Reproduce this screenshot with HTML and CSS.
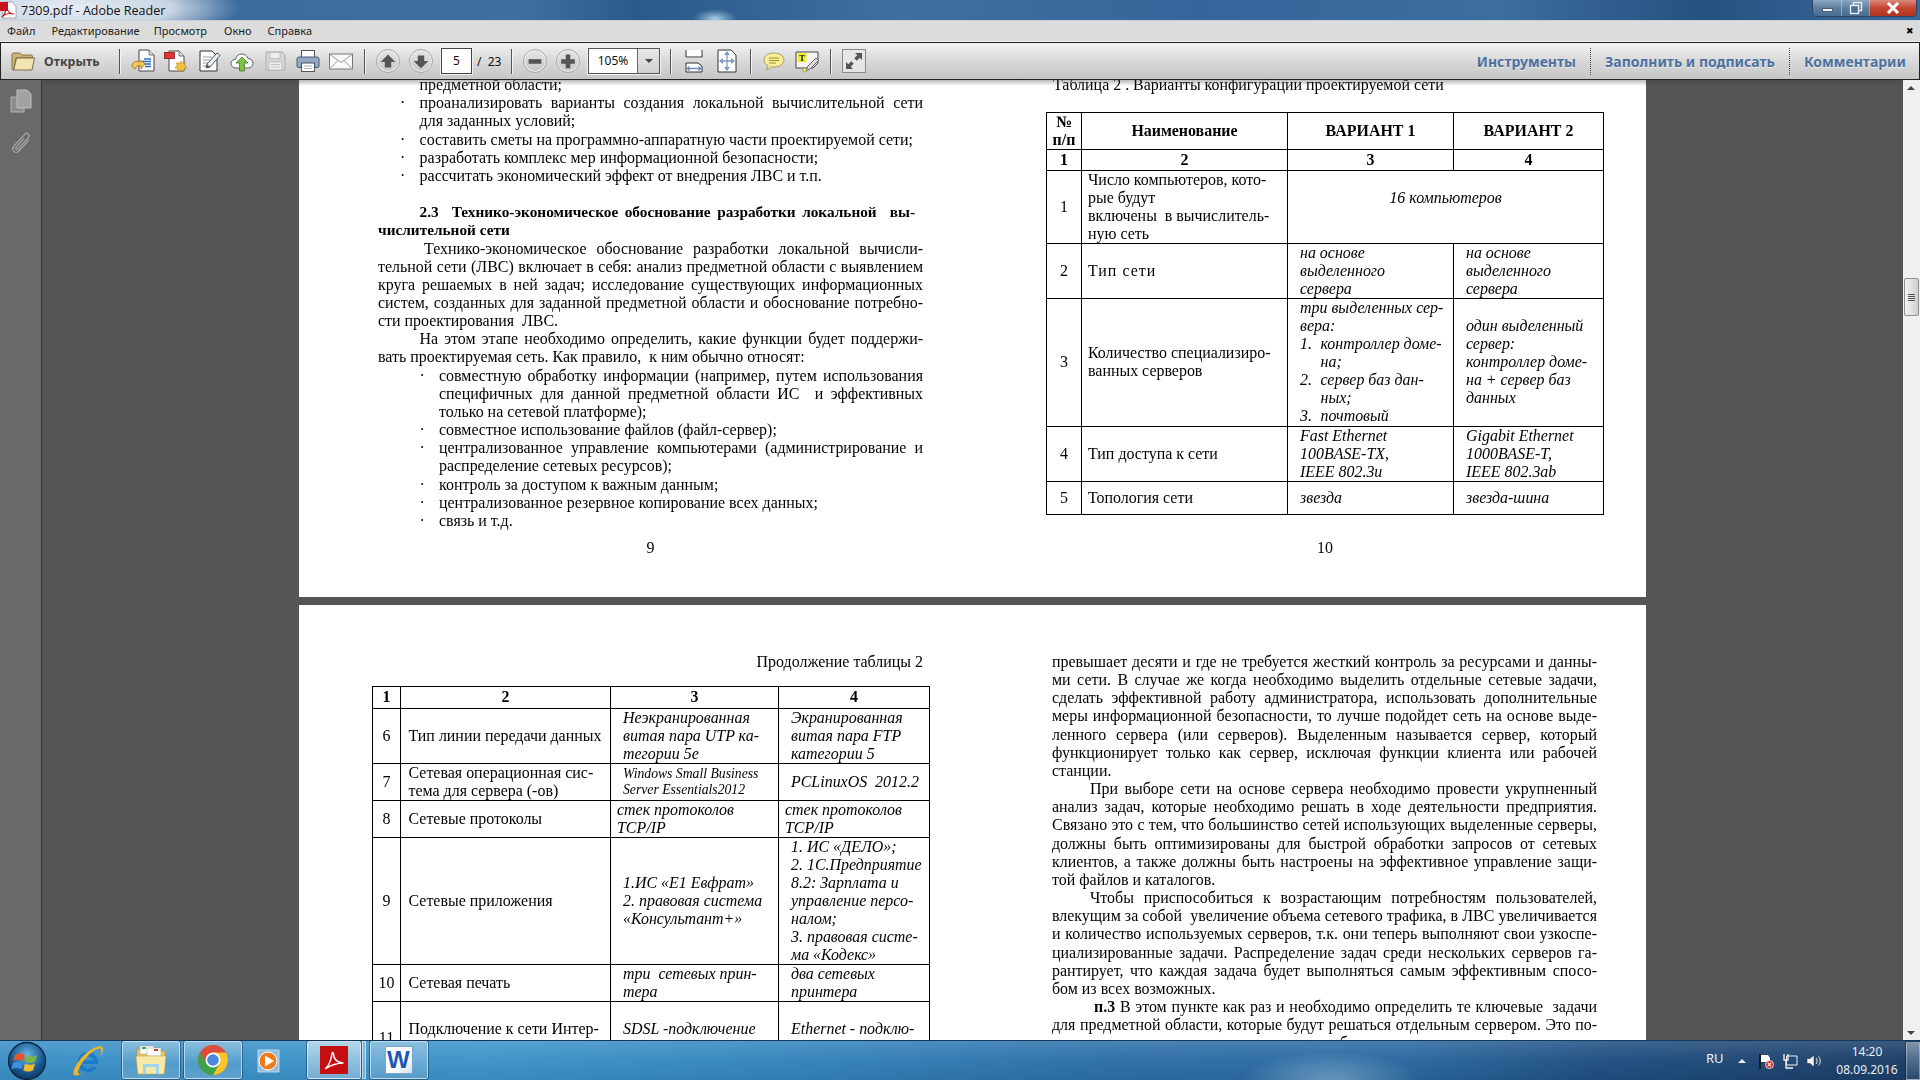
FILE: index.html
```html
<!DOCTYPE html>
<html lang="ru">
<head>
<meta charset="utf-8">
<title>7309.pdf - Adobe Reader</title>
<link rel="stylesheet" href="styles.css">
</head>
<body>
<div class="win">
  <header class="titlebar">
    <svg class="appicon" viewBox="0 0 18 18"><path d="M3 1h9l4 4v12H3z" fill="#fff" stroke="#8a8a8a" stroke-width=".7"/><path d="M0 1h8v9H0z" fill="#c8141c"/><path d="M2 16c2-2 4-6 4-9 0-2 1-2 1 0 0 3 3 6 7 6-4-1-9 0-12 3z" fill="none" stroke="#c8141c" stroke-width="1.2"/></svg>
    <span class="apptitle">7309.pdf - Adobe Reader</span>
    <div class="winbtns">
      <span class="wb wmin"><i></i></span>
      <span class="wb wmax"><svg viewBox="0 0 14 14" width="14" height="14"><rect x="4.5" y="1.5" width="8" height="8" fill="none" stroke="#e8eef4" stroke-width="1.4"/><rect x="1.5" y="4.5" width="8" height="8" fill="#4a6f95" stroke="#e8eef4" stroke-width="1.4"/></svg></span>
      <span class="wb wclose"><svg viewBox="0 0 14 12" width="14" height="12"><path d="M2 1l10 10M12 1L2 11" stroke="#fff" stroke-width="3"/></svg></span>
    </div>
  </header>

  <nav class="menubar">
    <span class="mi m1">Файл</span><span class="mi m2">Редактирование</span><span class="mi m3">Просмотр</span><span class="mi m4">Окно</span><span class="mi m5">Справка</span>
    <span class="mclose">✖</span>
  </nav>

  <div class="toolbar">
    <svg class="ic" viewBox="0 0 24 24"><path d="M1 5.500C1 4.500 2 4 3 4h6l2 2h9c1 0 1.500 .6 1.500 1.500V9H5L3 21H2.500C1.500 21 1 20.500 1 19.500z" fill="#c9b577" stroke="#6e5f35" stroke-width=".8"/><path d="M5.500 9H23.500L21 21H2.700z" fill="#f2e5b4" stroke="#6e5f35" stroke-width=".9"/></svg>
    <span class="open">Открыть</span>
    <span class="sep"></span>
    <div class="grp">
      <svg class="ic" viewBox="0 0 24 24"><path d="M8 1h10l5 5v16H8z" fill="#fff" stroke="#444"/><path d="M18 1v5h5" fill="#ddd" stroke="#444" stroke-width=".7"/><path d="M13 10h7M11 12.500h9M13 15h7M14 17.500h6" stroke="#2e6fc5" stroke-width="1.300"/><path d="M1 16c1-4 6-4 9-3v-2l4 4-4 5v-3c-3-1-5 0-6 3-2-1-3-2-3-4z" fill="#f0c65a" stroke="#9a6c14" stroke-width=".8"/></svg>
      <svg class="ic" viewBox="0 0 24 24"><path d="M5 2h10l5 5v15H5z" fill="#fff" stroke="#444"/><path d="M15 2v5h5" fill="#ddd" stroke="#444" stroke-width=".7"/><rect x="0.500" y="3.500" width="10" height="6" fill="#e0363a" stroke="#8c1414" stroke-width=".8"/><path d="M17 12l1.500 2.500 3-.7-.8 3 2.300 2-3 1-.5 3-2.500-1.800-2.500 1.800-.5-3-3-1 2.300-2-.8-3 3 .7z" fill="#f0c23c" stroke="#b07f14" stroke-width=".6"/></svg>
      <svg class="ic" viewBox="0 0 24 24"><path d="M3 2h12l5 5v15H3z" fill="#fff" stroke="#333"/><path d="M6 8h9M6 11h7M6 14h5M6 17h3" stroke="#999"/><path d="M9 19l1-4L20 4l3 2.500L13 18z" fill="#e9eff7" stroke="#4c5a73"/><path d="M10 15l3 3-4 1z" fill="#555"/></svg>
      <svg class="ic" viewBox="0 0 24 24"><path d="M6 19c-3 0-5-2-5-4.500S3 10.500 5.500 10.500C6 7 8.500 5 12 5c3 0 5 2 6 4.500 3 0 5 2 5 4.700S21 19 18 19z" fill="#fafafa" stroke="#5a6470"/><path d="M12 8l6 6h-3.500v8h-5v-8H6z" fill="#7dc242" stroke="#3f7d1a" stroke-width=".8"/></svg>
      <svg class="ic" viewBox="0 0 24 24"><path d="M3 3h16l3 3v15H3z" fill="#d6d6d6" stroke="#aaa"/><rect x="7" y="3.500" width="10" height="6" fill="#eee" stroke="#b5b5b5" stroke-width=".7"/><rect x="6" y="13" width="13" height="8" fill="#eee" stroke="#b5b5b5" stroke-width=".7"/><path d="M8 15.500h9M8 18h9" stroke="#c0c0c0"/></svg>
      <svg class="ic" viewBox="0 0 24 24"><rect x="5.500" y="1.500" width="13" height="8" fill="#fff" stroke="#555"/><path d="M3 8h18c1.500 0 2 1 2 2v7c0 1-.5 1.500-2 1.500H3C1.500 18.500 1 18 1 17v-7c0-1 .5-2 2-2z" fill="#8fa9c4" stroke="#4c5a70"/><rect x="5.500" y="14" width="13" height="8.500" fill="#fff" stroke="#555"/><path d="M8 17h8M8 19.500h8" stroke="#aaa"/></svg>
      <svg class="ic" viewBox="0 0 24 24"><rect x=".5" y="5" width="23" height="15" fill="#fafafa" stroke="#777"/><path d="M1 5.500l11 8 11-8M1 19.500l8-8M23 19.500l-8-8" fill="none" stroke="#999"/></svg>
    </div>
    <span class="sep"></span>
    <div class="grp">
      <span class="rnd"><svg viewBox="0 0 24 24"><path d="M12 5l8 8h-4.500v6h-7v-6H4z" fill="#555"/></svg></span>
      <span class="rnd"><svg viewBox="0 0 24 24"><path d="M12 20l8-8h-4.500V6h-7v6H4z" fill="#555"/></svg></span>
    </div>
    <span class="pageinp">5</span>
    <span class="pagetotal">/ &nbsp;23</span>
    <span class="sep"></span>
    <div class="grp">
      <span class="rnd"><svg viewBox="0 0 24 24"><rect x="5" y="10" width="14" height="5" fill="#555"/></svg></span>
      <span class="rnd"><svg viewBox="0 0 24 24"><path d="M9.500 5h5v5h5v5h-5v5h-5v-5h-5v-5h5z" fill="#555"/></svg></span>
    </div>
    <div class="zoomcombo"><span class="zv">105%</span><span class="za"><i></i></span></div>
    <span class="sep s2"></span>
    <div class="grp">
      <svg class="ic" viewBox="0 0 24 24"><path d="M4 1h16v8H4z" fill="#fff" stroke="none"/><path d="M4 1v7h16V1M4 23v-9h12l4 3v6z" fill="#fff" stroke="#333"/><path d="M5 19.500h14M5 19.500l2.500-2M5 19.500l2.500 2M19 19.500l-2.500-2M19 19.500l-2.500 2" fill="none" stroke="#6f87b5" stroke-width="1.300"/></svg>
      <svg class="ic" viewBox="0 0 24 24"><path d="M3 1h13l5 5v17H3z" fill="#fff" stroke="#333"/><path d="M12 3v18M5 12h14" stroke="#7f97c4" stroke-width="1.300"/><path d="M12 2l-3 4h6zM12 22l-3-4h6zM4 12l4-3v6zM20 12l-4-3v6z" fill="#7f97c4"/></svg>
    </div>
    <span class="sep"></span>
    <div class="grp">
      <svg class="ic" viewBox="0 0 24 24"><path d="M2 11c0-4 4-7 10-7s10 3 10 7-4 7-10 7c-1 0-2 0-3-.2-1 1.500-2.500 3-5 3 1-1 2-2.500 2-4.300-2.500-1-4-3-4-5.500z" fill="#f7ee9b" stroke="#a4a063"/><path d="M7 9h10M7 11.500h10M7 14h7" stroke="#a98f2a"/></svg>
      <svg class="ic" viewBox="0 0 24 24"><path d="M1 3h22v11l-5 5H1z" fill="#f4f4f4" stroke="#444"/><rect x="2.500" y="4" width="9" height="9" fill="#f4ee2c"/><text class="hlt" x="4" y="12">T</text><path d="M11 22l2-5 8-8 2.500 2.500-8 8z" fill="#ddd" stroke="#666"/><circle cx="9.500" cy="21" r="2" fill="#f4ee2c" stroke="#888" stroke-width=".7"/></svg>
    </div>
    <span class="sep"></span>
    <span class="expand"><svg viewBox="0 0 24 24" width="24" height="24"><rect x=".5" y=".5" width="23" height="23" fill="#e6e6e6" stroke="#888"/><path d="M13 4h7v7l-2.300-2.300-3 3-2.400-2.400 3-3zM11 20H4v-7l2.300 2.300 3-3 2.400 2.400-3 3z" fill="#555"/></svg></span>
    <div class="tools">
      <span class="tool">Инструменты</span><span class="tool dot">Заполнить и подписать</span><span class="tool dot">Комментарии</span>
    </div>
  </div>

  <div class="docarea">
    <aside class="navpanel">
      <svg viewBox="0 0 22 24" class="navic"><path d="M1 8h13v15H1z" fill="#8c8c8c" stroke="#b4b4b4"/><path d="M7 1h10l4 4v14H7z" fill="#a2a2a2" stroke="#c0c0c0"/></svg>
      <svg viewBox="0 0 22 24" class="navic clip"><path d="M4 15L15 3c2-2 5.500 1 3.500 3.500L8 18c-1.200 1.300-3 0-2-1.500l8-9M4 15c-3 3.500 1 8.500 4.500 5.500L19 9" fill="none" stroke="#a0a0a0" stroke-width="1.400"/></svg>
    </aside>
    <main class="viewer">
      <div class="pages">
        <section class="page p1">
          <div class="col">
            <div class="l i1">предметной области;</div>
            <div class="l i1 b1 j">проанализировать варианты создания локальной вычислительной сети</div>
            <div class="l i1">для заданных условий;</div>
            <div class="l i1 b1">составить сметы на программно-аппаратную части проектируемой сети;</div>
            <div class="l i1 b1">разработать комплекс мер информационной безопасности;</div>
            <div class="l i1 b1">рассчитать экономический эффект от внедрения ЛВС и т.п.</div>
            <div class="l">&nbsp;</div>
            <div class="l i1 h j ph">2.3&nbsp; Технико-экономическое обоснование разработки локальной&nbsp; вы-</div>
            <div class="l h">числительной сети</div>
            <div class="l i1b j">Технико-экономическое обоснование разработки локальной вычисли-</div>
            <div class="l j">тельной сети (ЛВС) включает в себя: анализ предметной области с выявлением</div>
            <div class="l j">круга решаемых в ней задач; исследование существующих информационных</div>
            <div class="l j">систем, созданных для заданной предметной области и обоснование потребно-</div>
            <div class="l">сти проектирования&nbsp; ЛВС.</div>
            <div class="l i1 j">На этом этапе необходимо определить, какие функции будет поддержи-</div>
            <div class="l">вать проектируемая сеть. Как правило,&nbsp; к ним обычно относят:</div>
            <div class="l i2 b2 j">совместную обработку информации (например, путем использования</div>
            <div class="l i2 j">специфичных для данной предметной области ИС&nbsp; и эффективных</div>
            <div class="l i2">только на сетевой платформе);</div>
            <div class="l i2 b2">совместное использование файлов (файл-сервер);</div>
            <div class="l i2 b2 j">централизованное управление компьютерами (администрирование и</div>
            <div class="l i2">распределение сетевых ресурсов);</div>
            <div class="l i2 b2">контроль за доступом к важным данным;</div>
            <div class="l i2 b2">централизованное резервное копирование всех данных;</div>
            <div class="l i2 b2">связь и т.д.</div>
            <div class="pn">9</div>
          </div>
          <div class="col">
            <div class="l capt">Таблица 2 . Варианты конфигурации проектируемой сети</div>
            <table class="tbl t1">
              <colgroup><col class="a1"><col class="a2"><col class="a3"><col class="a4"></colgroup>
              <tr><th class="hd">№<br>п/п</th><th class="hd">Наименование</th><th class="hd">ВАРИАНТ 1</th><th class="hd">ВАРИАНТ 2</th></tr>
              <tr class="idx"><th>1</th><th>2</th><th>3</th><th>4</th></tr>
              <tr><td class="n">1</td><td class="nm">Число компьютеров, кото-<br>рые будут<br>включены&nbsp; в вычислитель-<br>ную сеть</td><td class="v ctr" colspan="2">16 компьютеров</td></tr>
              <tr><td class="n">2</td><td class="nm wide">Тип сети</td><td class="v">на основе<br>выделенного<br>сервера</td><td class="v">на основе<br>выделенного<br>сервера</td></tr>
              <tr><td class="n">3</td><td class="nm">Количество специализиро-<br>ванных серверов</td><td class="v">три выделенных сер-<br>вера:<br><span class="lst"><span class="ln">1.</span><span>контроллер доме-<br>на;</span></span><span class="lst"><span class="ln">2.</span><span>сервер баз дан-<br>ных;</span></span><span class="lst"><span class="ln">3.</span><span>почтовый</span></span></td><td class="v">один выделенный<br>сервер:<br>контроллер доме-<br>на + сервер баз<br>данных</td></tr>
              <tr><td class="n">4</td><td class="nm">Тип доступа к сети</td><td class="v">Fast Ethernet<br>100BASE-TX,<br>IEEE 802.3u</td><td class="v">Gigabit Ethernet<br>1000BASE-T,<br>IEEE 802.3ab</td></tr>
              <tr class="last"><td class="n">5</td><td class="nm">Топология сети</td><td class="v">звезда</td><td class="v">звезда-шина</td></tr>
            </table>
            <div class="pn">10</div>
          </div>
        </section>
        <section class="page p2">
          <div class="col2a">
            <div class="l cont">Продолжение таблицы 2</div>
            <table class="tbl t2">
              <colgroup><col class="b1c"><col class="b2c"><col class="b3c"><col class="b4c"></colgroup>
              <tr class="idx"><th>1</th><th>2</th><th>3</th><th>4</th></tr>
              <tr><td class="n">6</td><td class="nm">Тип линии передачи данных</td><td class="v2">Неэкранированная<br>витая пара UTP ка-<br>тегории 5е</td><td class="v2">Экранированная<br>витая пара FTP<br>категории 5</td></tr>
              <tr><td class="n">7</td><td class="nm">Сетевая операционная сис-<br>тема для сервера (-ов)</td><td class="v2 sm">Windows Small Business<br>Server Essentials2012</td><td class="v2">PCLinuxOS&nbsp; 2012.2</td></tr>
              <tr><td class="n">8</td><td class="nm">Сетевые протоколы</td><td class="v3">стек протоколов<br>TCP/IP</td><td class="v3">стек протоколов<br>TCP/IP</td></tr>
              <tr><td class="n">9</td><td class="nm">Сетевые приложения</td><td class="v2">1.ИС «Е1 Евфрат»<br>2. правовая система<br>«Консультант+»</td><td class="v2">1. ИС «ДЕЛО»;<br>2. 1С.Предприятие<br>8.2: Зарплата и<br>управление персо-<br>налом;<br>3. правовая систе-<br>ма «Кодекс»</td></tr>
              <tr><td class="n">10</td><td class="nm">Сетевая печать</td><td class="v2">три&nbsp; сетевых прин-<br>тера</td><td class="v2">два сетевых<br>принтера</td></tr>
              <tr class="r11"><td class="n">11</td><td class="nm">Подключение к сети Интер-<br>нет</td><td class="v2">SDSL -подключение<br>&nbsp;</td><td class="v2">Ethernet - подклю-<br>чение</td></tr>
            </table>
          </div>
          <div class="col2b">
            <div class="l j">превышает десяти и где не требуется жесткий контроль за ресурсами и данны-</div>
            <div class="l j">ми сети. В случае же когда необходимо выделить отдельные сетевые задачи,</div>
            <div class="l j">сделать эффективной работу администратора, использовать дополнительные</div>
            <div class="l j">меры информационной безопасности, то лучше подойдет сеть на основе выде-</div>
            <div class="l j">ленного сервера (или серверов). Выделенным называется сервер, который</div>
            <div class="l j">функционирует только как сервер, исключая функции клиента или рабочей</div>
            <div class="l">станции.</div>
            <div class="l ip j">При выборе сети на основе сервера необходимо провести укрупненный</div>
            <div class="l j">анализ задач, которые необходимо решать в ходе деятельности предприятия.</div>
            <div class="l j">Связано это с тем, что большинство сетей использующих выделенные серверы,</div>
            <div class="l j">должны быть оптимизированы для быстрой обработки запросов от сетевых</div>
            <div class="l j">клиентов, а также должны быть настроены на эффективное управление защи-</div>
            <div class="l">той файлов и каталогов.</div>
            <div class="l ip j">Чтобы приспособиться к возрастающим потребностям пользователей,</div>
            <div class="l j">влекущим за собой&nbsp; увеличение объема сетевого трафика, в ЛВС увеличивается</div>
            <div class="l j">и количество используемых серверов, т.к. они теперь выполняют свои узкоспе-</div>
            <div class="l j">циализированные задачи. Распределение задач среди нескольких серверов га-</div>
            <div class="l j">рантирует, что каждая задача будет выполняться самым эффективным спосо-</div>
            <div class="l">бом из всех возможных.</div>
            <div class="l ip3 j"><b>п.3</b> В этом пункте как раз и необходимо определить те ключевые&nbsp; задачи</div>
            <div class="l j">для предметной области, которые будут решаться отдельным сервером. Это по-</div>
            <div class="l">зволит определить какие ресурсы сервера будут</div>
          </div>
        </section>
      </div>
      <div class="tbshadow"></div>
    </main>
    <aside class="scrollbar">
      <span class="arr up"></span>
      <span class="thumb"><i></i><i></i><i></i><i></i></span>
      <span class="arr down"></span>
    </aside>
  </div>

  <footer class="taskbar">
    <span class="orb"><svg viewBox="0 0 40 40" width="40" height="40"><defs><radialGradient id="og" cx=".5" cy=".35" r=".7"><stop offset="0" stop-color="#6fb8e6"/><stop offset=".6" stop-color="#1a5a94"/><stop offset="1" stop-color="#0d2f52"/></radialGradient></defs><circle cx="20" cy="20" r="18.500" fill="url(#og)" stroke="#0d2640" stroke-width="1.300"/><path d="M8 14c3-2 7-2 10 0l-1.600 6c-3-1.600-7-1.600-10 0z" fill="#e8552c"/><path d="M20 14.500c3 1.800 7 1.600 10-.5l-1.700 6.300c-3 2-7 2-10 .4z" fill="#7db83a"/><path d="M6 22c3-1.600 7-1.600 10 0l-1.600 6.300c-3-1.700-7-1.700-10 0z" fill="#3f90dc"/><path d="M18 22.600c3 1.800 7 1.600 10-.4L26.300 29c-3 2-7 2-10 .3z" fill="#f4bb2c"/></svg></span>
    <span class="tzone ie"><svg viewBox="0 0 34 34" width="34" height="34"><path d="M17 8c-6 0-10 4-10 10s4 10 10 10c4 0 7-2 9-5h-5c-1 1-2 1.500-4 1.500-3 0-5-2-5.500-4.500H27c.5-7-4-12-10-12zm-5.400 8.500c.5-2.500 2.500-4 5.400-4s5 1.500 5.400 4z" fill="#1a7cc8"/><path d="M3 31C0 28 8 14 18 7c7-5 13-6 14-3 1 2-1 6-3 9 1-4 2-7 1-8-2-2-9 2-15 9C10 20 6 27 7 29c1 1 3 1 6-1-4 3-8 4-10 3z" fill="#f0b428"/></svg></span>
    <span class="tbtn"><svg viewBox="0 0 34 34" width="34" height="34"><path d="M3 6h9l2 2h17v19H3z" fill="#e8c95c" stroke="#b89436" stroke-width=".7"/><rect x="6" y="3" width="14" height="8" fill="#fff" stroke="#999" stroke-width=".5"/><rect x="8" y="4" width="4" height="2" fill="#3aa84a"/><rect x="13" y="5" width="14" height="8" fill="#fff" stroke="#999" stroke-width=".5"/><rect x="20" y="6" width="4" height="2" fill="#d83a2a"/><path d="M2 13h30l-2 18H4z" fill="#f7e9a8" stroke="#c9a94c" stroke-width=".6"/><path d="M9 31V21h16v10h-3v-7H12v7z" fill="#9fd6ee"/></svg></span>
    <span class="tbtn"><svg viewBox="0 0 34 34" width="34" height="34"><circle cx="17" cy="17" r="15" fill="#dd4b39"/><path d="M4.010 9.500A15 15 0 0 0 17 32L23.500 20.750H10.500z" fill="#3da34a"/><path d="M17 32A15 15 0 0 0 29.990 9.500H17L23.500 20.750z" fill="#f7c52b"/><circle cx="17" cy="17" r="7.500" fill="#fff"/><circle cx="17" cy="17" r="5.800" fill="#4a88e0"/></svg></span>
    <span class="tzone wm"><svg viewBox="0 0 34 34" width="34" height="34"><path d="M5 6h21v22H5z" fill="#8ec0e0" stroke="#d2e6f4" stroke-width=".8"/><circle cx="15" cy="17" r="9" fill="#ee7a1c" stroke="#fff" stroke-width="1"/><path d="M12 11.500v11l9-5.500z" fill="#fff"/></svg></span>
    <span class="tbtn tb2"><svg viewBox="0 0 30 30" width="30" height="30"><rect x="1" y="1" width="28" height="28" fill="#c60d10"/><path d="M6 24c4-3 6-9 7-15 .2-2 1.500-2 1.500 0 0 5 4 9 10 9-4 0-11 1-18.500 6z" fill="none" stroke="#fff" stroke-width="1.500"/></svg></span>
    <span class="tnarrow"></span>
    <span class="tbtn wordb"><span class="wpage"><b class="wltr">W</b></span></span>
    <div class="tray">
      <span class="ru">RU</span>
      <span class="trup"></span>
      <svg class="tri" viewBox="0 0 16 16"><path d="M2 1v15" stroke="#111" stroke-width="1.500"/><path d="M3 2h7l2 3 0 4H3z" fill="#fff"/><circle cx="11.500" cy="11.500" r="4" fill="#d8232a" stroke="#fff" stroke-width=".8"/><path d="M9.800 9.800l3.400 3.400M13.200 9.800l-3.400 3.400" stroke="#fff" stroke-width="1.100"/></svg>
      <svg class="tri" viewBox="0 0 16 16"><path d="M4.500 3H15v9H4.500z" fill="#1d4c78" stroke="#f4f4f4"/><path d="M2 1v6h4V1M4 7v8h7" fill="none" stroke="#f4f4f4" stroke-width="1.300"/></svg>
      <svg class="tri" viewBox="0 0 16 16"><path d="M1 5.500h3L8 2v12L4 10.500H1z" fill="#f2f2f2" stroke="#222" stroke-width=".5"/><path d="M10 5c1.500 1.500 1.500 4.500 0 6M12.500 3.500c2.300 2.500 2.300 6.500 0 9" fill="none" stroke="#eee" stroke-width="1"/></svg>
      <div class="clock"><span>14:20</span><span>08.09.2016</span></div>
      <span class="showdesk"></span>
    </div>
  </footer>
</div>
</body>
</html>
```
FILE: styles.css
```css
* { box-sizing: border-box; }
html, body { margin: 0; height: 1080px; overflow: hidden; background: #555; }
.win { display: flex; flex-direction: column; width: 1920px; height: 1080px; overflow: hidden; }

/* Title bar */
.titlebar {
  flex: none; height: 21px; display: flex; align-items: center;
  border-bottom: 1px solid #c6d3df;
  background:
    radial-gradient(ellipse 22px 10px at 715px 19px, #a9d0e6 0, rgba(169,208,230,.45) 50%, rgba(169,208,230,0) 100%),
    radial-gradient(ellipse 170px 34px at 70px 8px, rgba(255,255,255,.88) 0, rgba(255,255,255,.72) 60%, rgba(255,255,255,0) 100%),
    linear-gradient(90deg, #36689b 0, #3f6f9f 520px, #2a598c 640px, #3f6f9f 900px, #35659a 1200px, #3b6d9f 1500px, #25517f 1700px, #39689a 1900px);
}
.appicon { width: 18px; height: 18px; margin-left: 0; flex: none; }
.apptitle { margin-left: 3px; font: 12.500px "Open Sans", sans-serif; color: #111; }
.winbtns { margin-left: auto; margin-right: 3px; margin-top: -4px; height: 17px; display: flex; border: 1px solid #2d4560; border-top: 0; border-radius: 0 0 5px 5px; overflow: hidden; }
.wb { display: flex; align-items: center; justify-content: center; height: 16px; border-left: 1px solid rgba(255,255,255,.35); }
.wmin, .wmax { width: 28px; background: linear-gradient(#8aa6c0, #5f7f9f 50%, #476d91); }
.wmin { border-left: 0; }
.wmin i { display: block; width: 11px; height: 4px; margin-top: 5px; background: #eef3f7; border: 1px solid #4c5f73; }
.wclose { width: 47px; background: linear-gradient(#d9897c, #c5452f 50%, #b1321f); }

/* Menu bar */
.menubar { flex: none; height: 21px; background: #dcdcdc; border-bottom: 1px solid #f2f2f2; display: flex; align-items: center; position: relative; font: 11px/20px "Noto Sans", sans-serif; color: #222; padding-left: 7px; }
.mi { white-space: nowrap; }
.m2 { margin-left: 16px; } .m3 { margin-left: 14px; } .m4 { margin-left: 17px; } .m5 { margin-left: 16px; }
.mclose { margin-left: auto; margin-right: 6px; font-size: 9px; color: #000; }

/* Toolbar */
.toolbar { flex: none; height: 38px; display: flex; align-items: center; padding-left: 10px; border: 1px solid #222; border-width: 1.500px 1px 1.500px 1px; background: linear-gradient(#f2f2f2, #d9d9d9 50%, #c6c6c6); }
.ic { width: 24px; height: 24px; flex: none; display: block; }
.open { margin-left: 9px; margin-right: 9px; font: bold 12.400px "Noto Sans", sans-serif; color: #444; width: 55px; white-space: nowrap; }
.sep { width: 2px; height: 25px; margin: 0 10px 0 11px; border-left: 1px solid #555; border-right: 1px solid #f4f4f4; flex: none; }
.s2 { margin-left: 10px; }
.grp { display: flex; gap: 9px; flex: none; }
.rnd { display: block; width: 24px; height: 24px; border-radius: 50%; border: 1px solid #a8a8a8; background: linear-gradient(#e6e6e6, #c6c6c6); box-shadow: inset 0 0 0 1px #f0f0f0; }
.rnd svg { display: block; width: 22px; height: 22px; }
.pageinp { width: 31px; height: 26px; margin-left: 8px; background: #fff; border: 1px solid #444; outline: 1px solid #f0f0f0; text-align: center; font: 12px/24px "Noto Sans", sans-serif; color: #111; flex: none; }
.pagetotal { width: 23px; margin-left: 5px; font: 12px "Noto Sans", sans-serif; color: #111; white-space: nowrap; flex: none; }
.zoomcombo { width: 72px; height: 26px; margin-left: 8px; display: flex; border: 1px solid #555; outline: 1px solid #f0f0f0; background: #fff; flex: none; }
.zv { width: 48px; text-align: center; font: 12px/24px "Noto Sans", sans-serif; color: #111; }
.za { flex: 1; border-left: 1px solid #666; background: linear-gradient(#e8e8e8, #d0d0d0); display: flex; align-items: center; justify-content: center; }
.za i { width: 0; height: 0; border: 4px solid transparent; border-top: 4px solid #444; border-bottom: 0; }
.expand { display: block; width: 24px; height: 24px; flex: none; }
.expand svg { display: block; }
.hlt { font: bold 9px "Liberation Serif", serif; fill: #222; }
.tools { margin-left: auto; display: flex; align-items: center; padding-right: 13px; }
.tool { font: bold 14px/27px "Noto Sans", sans-serif; color: #4d719f; padding: 0 14px; white-space: nowrap; text-shadow: 0 1px 0 rgba(255,255,255,.6); }
.tool:last-child { padding-right: 0; }
.dot { border-left: 1px dotted #444; }

/* Document area */
.docarea { flex: 1; min-height: 0; display: flex; }
.navpanel { flex: none; width: 42px; background: #696969; border-right: 1px solid #333; display: flex; flex-direction: column; align-items: center; padding-top: 9px; gap: 18px; }
.navic { width: 22px; height: 24px; display: block; }
.viewer { flex: 1; min-width: 0; overflow: hidden; position: relative; background: #555; }
.tbshadow { position: absolute; left: 0; right: 0; top: 0; height: 6px; background: linear-gradient(rgba(60,60,60,.35), rgba(60,60,60,0)); }
.pages { margin-top: -3.900px; display: flex; flex-direction: column; align-items: center; gap: 8px; }
.page { width: 1347px; background: #fff; font: 15.950px/18.160px "Liberation Serif", serif; color: #000; filter: blur(.3px); flex: none; }
.p1 { height: 520.900px; display: grid; grid-template-columns: 545px 558px; column-gap: 123px; padding-left: 79px; }
.p2 { height: 480px; padding-top: 48px; padding-left: 73px; display: grid; grid-template-columns: 558px 545px; column-gap: 122px; }
.col { display: flex; flex-direction: column; height: 481px; }
.l { height: 18.160px; white-space: nowrap; }
.j { text-align: justify; text-align-last: justify; white-space: normal; }
.i1 { padding-left: 41.600px; }
.i1b { padding-left: 46px; }
.i2 { padding-left: 61px; }
.ip { padding-left: 38px; }
.ip3 { padding-left: 42px; }
.b1::before, .b2::before { content: "·"; display: inline-block; width: 19.500px; margin-left: -19.500px; }
.h { font-weight: bold; font-size: 15.300px; }
.ph { padding-right: 8px; }
.pn { margin-top: auto; text-align: center; }
.capt { padding-left: 7px; margin-bottom: 17.600px; }

/* Tables */
.tbl { border-collapse: collapse; table-layout: fixed; width: 557px; }
.tbl td, .tbl th { border: 1px solid #000; padding: 0; vertical-align: middle; line-height: 18.050px; }
.a1 { width: 35px; } .a2 { width: 206px; } .a3 { width: 166px; } .a4 { width: 150px; }
.b1c { width: 28px; } .b2c { width: 210px; } .b3c { width: 168px; } .b4c { width: 151px; }
.hd { height: 37.400px; }
.idx th { height: 20.600px; }
.t2 .idx th { height: 22px; }
.n { text-align: center; }
.nm { padding-left: 6px !important; white-space: nowrap; }
.t2 .nm { padding-left: 7.500px !important; }
.wide { letter-spacing: 1px; }
.v { padding-left: 12px !important; font-style: italic; white-space: nowrap; }
.ctr { text-align: center; padding-left: 0 !important; padding-bottom: 18px !important; }
.lst { display: flex; }
.ln { width: 20.500px; flex: none; }
.last td { height: 33px; }
.v2 { padding-left: 12px !important; font-style: italic; white-space: nowrap; }
.v3 { padding-left: 6px !important; font-style: italic; white-space: nowrap; }
.sm { font-size: 13.700px; line-height: 16px !important; }
.r11 td { height: 72px; }
.cont { text-align: right; width: 551px; margin-bottom: 14.500px; }
.col2b { padding-left: 0; }

/* Scrollbar */
.scrollbar { flex: none; width: 17px; background: #f0f0f0; display: flex; flex-direction: column; align-items: center; position: relative; }
.arr { width: 0; height: 0; border: 4px solid transparent; position: absolute; left: 4px; }
.up { top: 6px; border-bottom: 4px solid #444; border-top: 0; }
.down { bottom: 5px; border-top: 4px solid #444; border-bottom: 0; }
.thumb { margin-top: 198px; width: 15px; height: 38px; border: 1px solid #8f8f8f; border-radius: 2px; background: linear-gradient(90deg, #f2f2f2, #d0d0d0); display: flex; flex-direction: column; align-items: center; justify-content: center; gap: 1px; }
.thumb i { display: block; width: 7px; height: 1px; background: #555; }

/* Taskbar */
.taskbar { flex: none; height: 40px; display: flex; align-items: stretch; border-top: 1px solid #123a5e;
  background:
    linear-gradient(rgba(255,255,255,.14), rgba(255,255,255,.03) 45%, rgba(0,0,0,.06)),
    radial-gradient(ellipse 90px 30px at 1330px 40px, rgba(190,225,245,.45), rgba(190,225,245,0)),
    linear-gradient(90deg, #3a8fc6 0, #3c94ca 480px, #3383bd 800px, #2c6fa8 1100px, #2a689f 1400px, #1e4f82 1600px, #1d4673 1750px, #1a3c66 1920px);
}
.orb { width: 60px; padding-left: 7px; display: flex; align-items: center; flex: none; }
.tzone { flex: none; display: flex; align-items: center; justify-content: center; }
.ie { width: 56px; }
.wm { width: 56px; margin-left: 0; }
.tbtn { flex: none; width: 58px; margin: 0 0 1px 6px; display: flex; align-items: center; justify-content: center; background: linear-gradient(rgba(255,255,255,.32), rgba(255,255,255,.1) 60%, rgba(255,255,255,.2)); border: 1px solid rgba(255,255,255,.55); outline: 1px solid rgba(10,40,70,.45); border-radius: 2px; }
.tbtn + .tbtn { margin-left: 4px; }
.tb2 { margin-left: 9px !important; width: 54px; background: linear-gradient(rgba(255,255,255,.55), rgba(255,255,255,.3)); }
.tnarrow { flex: none; width: 4px; margin: 0 0 1px 1px; background: rgba(255,255,255,.3); border: 1px solid rgba(255,255,255,.5); }
.wordb { margin-left: 4px; background: linear-gradient(rgba(255,255,255,.32), rgba(255,255,255,.15)); }
.wpage { display: block; width: 28px; height: 28px; background: linear-gradient(135deg, #fff 60%, #cfdff0); border: 1px solid #7aa3cc; }
.wltr { display: block; font: bold 24px/26px "Liberation Sans", sans-serif; color: #1d56b3; margin-left: 1px; }
.tray { margin-left: auto; display: flex; align-items: center; color: #e8eef4; font: 12px "Noto Sans", sans-serif; }
.ru { width: 16px; margin-top: -6px; font-size: 13px; }
.trup { width: 0; height: 0; border: 4px solid transparent; border-bottom: 4px solid #e8eef4; border-top: 0; margin: 0 12px 0 16px; }
.tri { width: 16px; height: 16px; display: block; margin-right: 8px; flex: none; }
.clock { width: 60px; margin-left: 7px; display: flex; flex-direction: column; align-items: center; line-height: 18px; }
.showdesk { width: 14px; height: 38px; margin-left: 9px; background: linear-gradient(rgba(255,255,255,.35), rgba(255,255,255,.08)); border: 1px solid rgba(255,255,255,.35); outline: 1px solid rgba(0,0,0,.3); }
```
